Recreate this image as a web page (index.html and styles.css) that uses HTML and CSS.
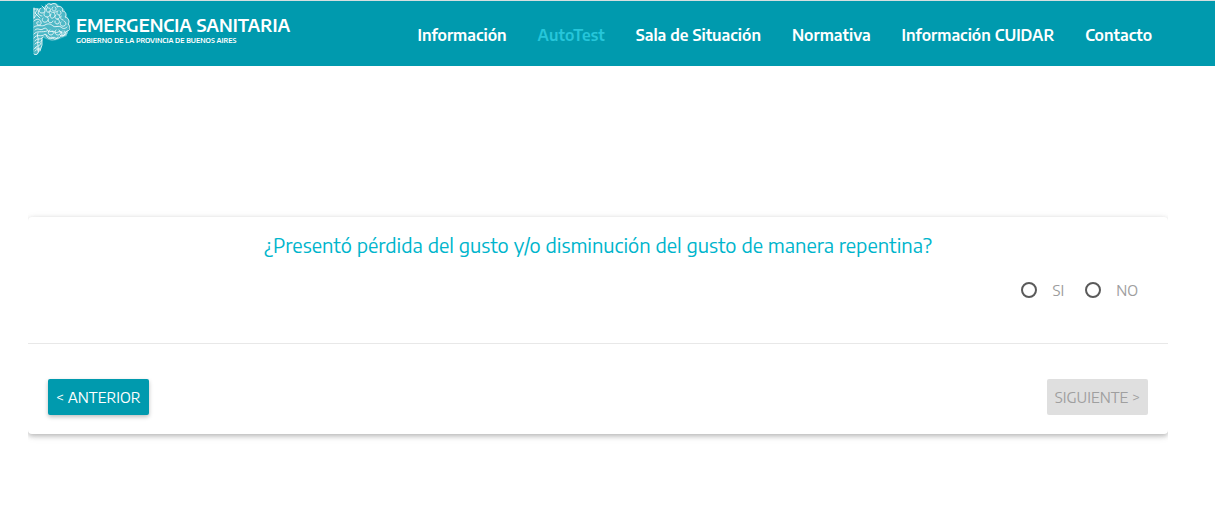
FILE: index.html
```html
<!DOCTYPE html>
<html lang="es">
<head>
    <meta charset="UTF-8">
    <meta name="viewport" content="width=device-width, initial-scale=1.0">
    <title>Emergencia Sanitaria</title>
    <link rel="stylesheet" href="styles.css">
</head>
<body>

<!-- Barra superior -->
<header class="navbar">
    <a href="#" class="brand">
        <svg class="brand-tree" viewBox="0 0 37 52" fill="none" stroke="#fff" stroke-width="0.8" stroke-linecap="round" aria-hidden="true">
            <!-- Silueta -->
            <path fill="#fff" fill-opacity="0.3" stroke="none" d="M0 5h8l4-2 4-3h7l4 3 4 3 2 5 3 6 1 8-3 3v5l-5 2-5 2-5 1-6-2-4-2v7l-2 7-3 4H1l-1-4z"/>
            <!-- Copa -->
            <path d="M12 6c0-4 4-7 6-4 2-3 7-1 6 2 4-2 7 2 5 4 4 0 5 4 3 6 4 1 5 5 3 7 3 3 2 7-1 7 1 4-3 5-6 4-1 4-5 4-7 2-3 3-7 2-8-2"/>
            <path d="M1 5v10M1 6h4l-3 4 5 5M4 11l-3 4M8 5c-3 2-2 5 1 5s4-3 2-5M6 7c-2 3 0 6 3 6M9 3l3 3M13 2l2 3"/>
            <path d="M14 5c-2 2 0 5 2 4s2-4 0-4M20 4c-2 1-1 4 1 4s3-3 1-4M17 8c2 2 5 2 7 0M25 8c-2 1-1 4 1 4s3-3 1-4"/>
            <path d="M12 9c-2 2-1 5 2 5s4-3 2-5M18 11c-2 2 0 5 2 4s3-4 1-5M23 12c-2 1-1 4 1 4s4-2 2-4M28 13c-1 2 0 4 2 4"/>
            <path d="M1 18c3-3 6-2 7 1s-3 4-4 2 1-3 2-2M10 15c-2 2 0 5 3 4s3-4 1-5M15 17c0 3 4 4 5 1M22 18c-1 3 3 4 4 2s0-4-2-4M28 19c-2 2 0 5 3 4s2-4 0-5"/>
            <path d="M1 24c4-3 8 0 11-2s6-1 8 1 6-1 8 1 4 2 6 0M2 27c3-3 5 1 8-1s4 0 5 2 5-1 7 1 4-2 6 0 4 1 6-1"/>
            <path d="M17 27c-3 1-2 5 1 5s3-4 1-4M23 27c-2 2-1 5 2 5s3-4 1-5M29 28c-2 2 0 5 2 4s2-4 0-4M19 34c1 3 5 3 6 0M27 32c1 2 4 2 5-1"/>
            <!-- Tronco -->
            <path d="M1 31c3-4 8-1 13-3M1 35c3-5 7 0 11-4 3 2 4 4 7 4M2 38c2-4 6 0 8-4M2 41c3-4 5 1 7-4M2 45c3-4 4 0 6-5M9 35v7l-2 6M1 46c2-3 4 1 6-1M2 48c2-3 3 0 5-2M1 51c1 1 3 1 4-1l1-3M5 30c-2 3 1 5 0 8s1 6 0 10"/>
        </svg>
        <span class="brand-text">
            <strong>EMERGENCIA SANITARIA</strong>
            <small>GOBIERNO DE LA PROVINCIA DE BUENOS AIRES</small>
        </span>
    </a>
    <nav class="menu">
        <a href="#">Información</a>
        <a href="#" class="active">AutoTest</a>
        <a href="#">Sala de Situación</a>
        <a href="#">Normativa</a>
        <a href="#">Información CUIDAR</a>
        <a href="#">Contacto</a>
    </nav>
</header>

<!-- Pregunta del autotest -->
<main class="container">
    <form class="card">
        <fieldset class="card-content">
            <legend class="question">¿Presentó pérdida del gusto y/o disminución del gusto de manera repentina?</legend>
            <div class="options">
                <label class="option"><input type="radio" name="gusto" value="si">SI</label>
                <label class="option"><input type="radio" name="gusto" value="no">NO</label>
            </div>
        </fieldset>
        <div class="card-action">
            <button type="button" class="btn">&lt; ANTERIOR</button>
            <button type="submit" class="btn" disabled>SIGUIENTE &gt;</button>
        </div>
    </form>
</main>

</body>
</html>
```

FILE: styles.css
```css
* {
    box-sizing: border-box;
}

body {
    margin: 0;
    background-color: #fff;
    font-family: "Encode Sans", "Noto Sans", sans-serif;
    font-size: 15px;
}

/* Barra superior */
.navbar {
    display: flex;
    justify-content: space-between;
    height: 66px;
    padding: 0 63px 0 33px;
    border-top: 1px solid #d5dfe0;
    background-color: #009aae;
}

.brand {
    display: flex;
    gap: 6px;
    padding-top: 2px;
    color: #fff;
    text-decoration: none;
}

.brand-tree {
    width: 37px;
    height: 52px;
}

.brand-text {
    display: flex;
    flex-direction: column;
    padding-top: 11px;
    white-space: nowrap;
}

.brand-text strong {
    font-size: 18px;
    line-height: 22px;
    font-weight: 600;
}

.brand-text small {
    font-size: 7px;
    line-height: 10px;
    font-weight: 600;
}

.menu {
    display: flex;
    align-items: center;
    gap: 31px;
    padding-top: 2px;
    white-space: nowrap;
}

.menu a {
    color: #fff;
    font-size: 16px;
    font-weight: 600;
    text-decoration: none;
}

.menu .active {
    color: #26c6da;
}

/* Tarjeta */
.container {
    margin: 0 47px 0 28px;
    padding: 151px 0 30px;
    overflow: hidden;
}

.card {
    border-radius: 4px;
    background-color: #fff;
    box-shadow: 0 2px 5px rgba(0, 0, 0, 0.24), 0 2px 10px rgba(0, 0, 0, 0.08);
}

.card-content {
    margin: 0;
    padding: 14px 30px 41px;
    border: 0;
}

.question {
    float: left;
    width: 100%;
    padding: 0;
    color: #00b5cc;
    font-size: 20px;
    line-height: 28px;
    font-weight: 400;
    text-align: center;
}

.options {
    clear: both;
    display: flex;
    justify-content: flex-end;
    gap: 21px;
    padding-top: 19px;
}

.option {
    display: flex;
    align-items: center;
    gap: 15px;
    color: #9e9e9e;
    line-height: 24px;
}

.option input {
    appearance: none;
    width: 16px;
    height: 16px;
    margin: 0;
    border: 2px solid #5a5a5a;
    border-radius: 50%;
}

.option input:checked {
    background-color: #009aae;
}

.card-action {
    display: flex;
    justify-content: space-between;
    padding: 35px 20px 19px;
    border-top: 1px solid #e8e8e8;
}

.btn {
    height: 36px;
    padding: 0 8px;
    border: 0;
    border-radius: 2px;
    background-color: #009aae;
    box-shadow: 0 2px 4px rgba(0, 0, 0, 0.25);
    color: #fff;
    font-family: inherit;
    font-size: 15px;
    cursor: pointer;
}

.btn:disabled {
    background-color: #dfdfdf;
    box-shadow: none;
    color: #9f9f9f;
    cursor: default;
}
```
